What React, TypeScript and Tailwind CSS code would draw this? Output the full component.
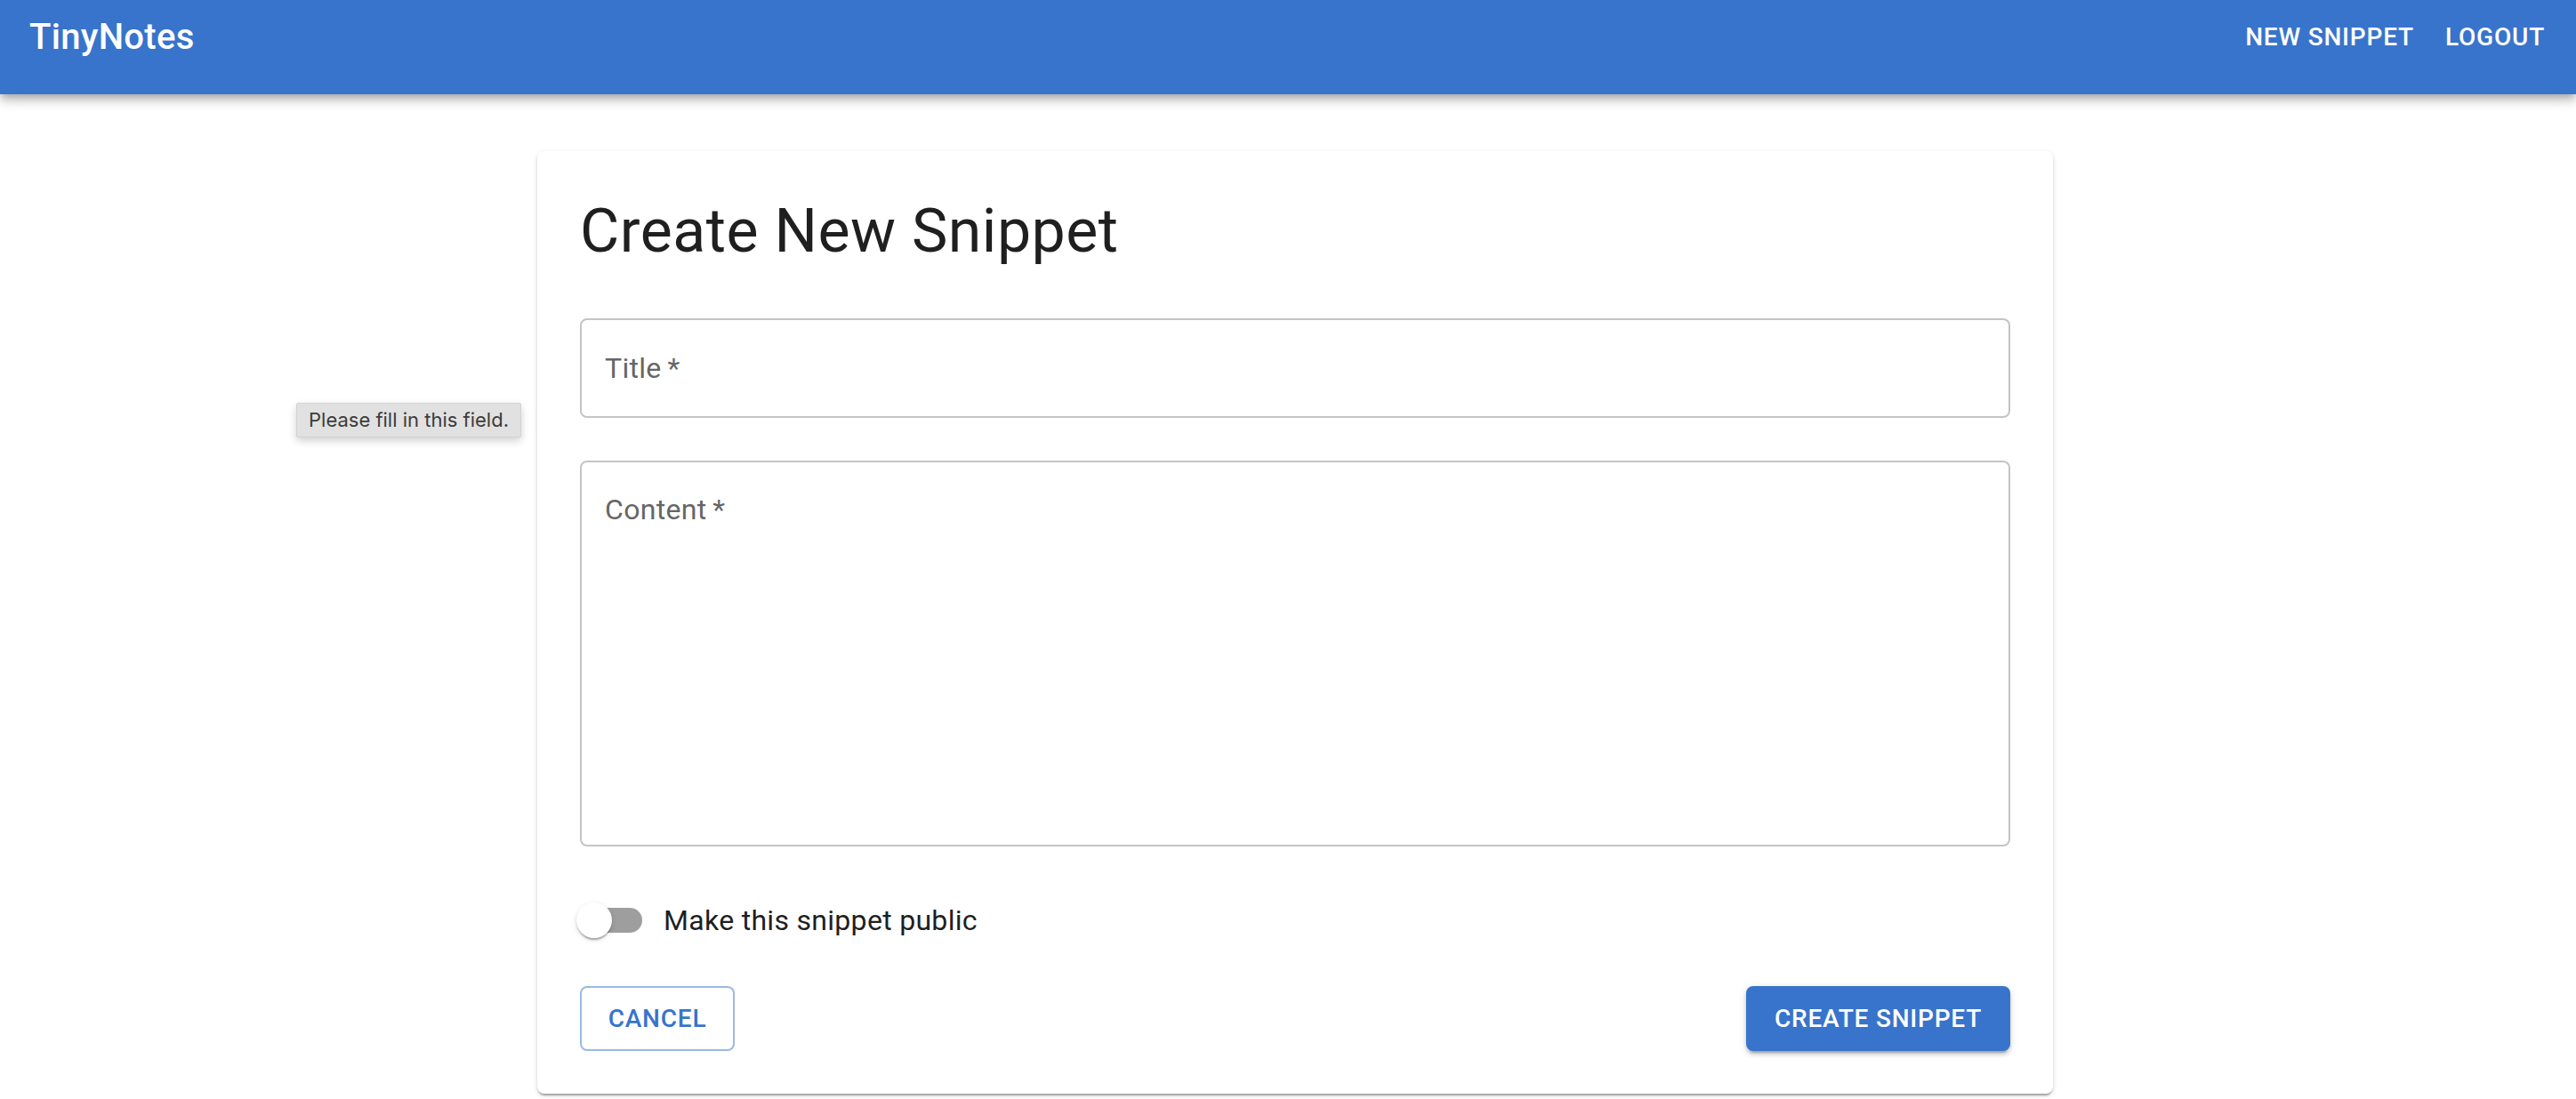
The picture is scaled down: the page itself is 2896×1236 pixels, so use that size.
const SwitchOff = () => (
  <span className="relative inline-block w-[116px] h-[76px] ml-[-22px] shrink-0">
    <span className="absolute left-[24px] top-[24px] w-[68px] h-[28px] rounded-full bg-[#9e9e9e]" />
    <span className="absolute left-[18px] top-[18px] w-[40px] h-[40px] rounded-full bg-white shadow-[0_4px_2px_-2px_rgba(0,0,0,0.2),0_2px_2px_0_rgba(0,0,0,0.14),0_2px_6px_0_rgba(0,0,0,0.12)]" />
  </span>
);

export default function App() {
  return (
    <div className="relative min-h-screen bg-white font-['Roboto',sans-serif]">
      {/* App bar */}
      <header className="relative z-10 h-[106px] bg-[#3874cb] flex items-center justify-between pl-[33px] pr-[35px] pb-[22px] shadow-[0_4px_8px_-2px_rgba(0,0,0,0.2),0_8px_10px_0_rgba(0,0,0,0.14),0_2px_20px_0_rgba(0,0,0,0.12)]">
        <div className="text-[40px] font-medium text-white tracking-[0.3px] leading-none">TinyNotes</div>
        <nav className="flex items-center gap-[35px] text-[28px] font-medium tracking-[0.8px] text-white uppercase leading-none">
          <span>New Snippet</span>
          <span>Logout</span>
        </nav>
      </header>

      {/* Form card */}
      <main className="flex justify-center pl-[16px] pt-[64px]">
        <div className="w-[1704px] rounded-[8px] bg-white p-[48px] shadow-[0_4px_2px_-2px_rgba(0,0,0,0.2),0_2px_2px_0_rgba(0,0,0,0.14),0_2px_6px_0_rgba(0,0,0,0.12)]">
          <h1 className="text-[68px] leading-[84px] tracking-[0.5px] text-[#1f1f1f]">Create New Snippet</h1>

          <div className="mt-[56px] h-[112px] rounded-[8px] border-2 border-[#c4c4c4] px-[26px] flex items-center">
            <span className="text-[32px] text-[#666666] tracking-[0.3px]">Title{'\u2009'}*</span>
          </div>

          <div className="mt-[48px] h-[434px] rounded-[8px] border-2 border-[#c4c4c4] px-[26px] pt-[30px]">
            <span className="block text-[32px] leading-[46px] text-[#666666] tracking-[0.3px]">Content{'\u2009'}*</span>
          </div>

          <div className="mt-[45px] h-[76px] flex items-center">
            <SwitchOff />
            <span className="text-[32px] text-[#1f1f1f] tracking-[0.3px]">Make this snippet public</span>
          </div>

          <div className="mt-[36px] flex items-center justify-between">
            <button className="w-[174px] h-[73px] rounded-[8px] border-2 border-[#3874cb]/50 text-[28px] font-medium tracking-[0.8px] text-[#3874cb] uppercase">
              Cancel
            </button>
            <button className="w-[297px] h-[73px] rounded-[8px] bg-[#3874cb] text-[28px] font-medium tracking-[0.8px] text-white uppercase shadow-[0_6px_2px_-4px_rgba(0,0,0,0.2),0_4px_4px_0_rgba(0,0,0,0.14),0_2px_10px_0_rgba(0,0,0,0.12)]">
              Create Snippet
            </button>
          </div>
        </div>
      </main>

      {/* Browser validation bubble */}
      <div className="absolute left-[333px] top-[453px] w-[253px] h-[39px] flex items-center pl-[13px] bg-[#e1e1e1] border border-[#d2d2d2] rounded-[2px] shadow-[0_4px_10px_rgba(0,0,0,0.18)] font-['Inter',sans-serif] text-[22px] text-[#3c3c3c]">
        Please fill in this field.
      </div>
    </div>
  );
}
